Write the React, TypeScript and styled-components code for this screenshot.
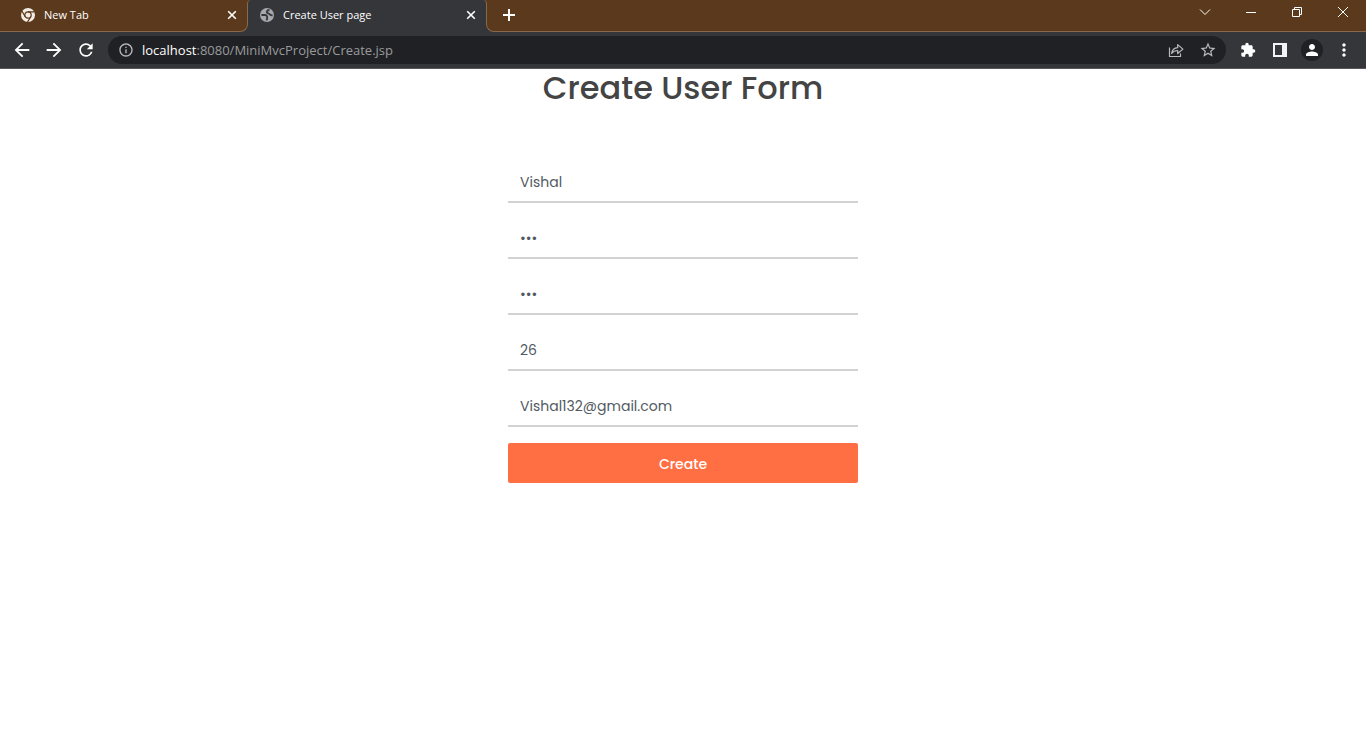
import React from "react";
import styled, { createGlobalStyle } from "styled-components";
import {
  MdArrowBack,
  MdArrowForward,
  MdExtension,
  MdInfoOutline,
  MdMoreVert,
  MdPerson,
  MdRefresh,
  MdStarBorder,
} from "react-icons/md";

const frame = "#5b391c";
const line = "#886a4a";
const bar = "#35363a";

const GlobalStyle = createGlobalStyle`
  *, *::before, *::after { box-sizing: border-box; }
  body { margin: 0; background: #fff; }
  button { padding: 0; border: 0; background: none; color: inherit; cursor: pointer; }
`;

const Browser = styled.header`
  font-family: "Open Sans", "Noto Sans", sans-serif;
  color: #fff;
`;

const TabStrip = styled.div`
  display: flex;
  align-items: flex-end;
  height: 32px;
  background: ${frame};
`;

const InactiveSlot = styled.div<{ $grow?: boolean }>`
  z-index: 1;
  flex: ${(p) => (p.$grow ? "1 1 auto" : "0 0 248px")};
  height: 28px;
  background: ${bar};
`;

const InactiveArea = styled.div<{ $side: "left" | "right" }>`
  display: flex;
  height: 100%;
  background: ${frame};
  border-bottom: 1px solid ${line};
  border-${(p) => (p.$side === "left" ? "right" : "left")}: 1px solid ${line};
  border-radius: ${(p) => (p.$side === "left" ? "0 0 8px 0" : "0 0 0 8px")};
`;

const ActiveTab = styled.div`
  display: flex;
  flex: 0 0 240px;
  height: 32px;
  margin: 0 -1px;
  padding-top: 4px;
  background: ${bar};
  border: 1px solid ${line};
  border-width: 0 1px;
  border-radius: 4px 4px 0 0;
`;

const TabContent = styled.div<{ $start: number }>`
  display: flex;
  flex: 1;
  align-items: center;
  gap: 8px;
  height: 22px;
  padding: 0 7px 0 ${(p) => p.$start}px;
`;

const TabTitle = styled.span`
  flex: 1;
  font-size: 11px;
  line-height: 16px;
  white-space: nowrap;
`;

const SmallButton = styled.button`
  display: flex;
  align-items: center;
  justify-content: center;
  width: 16px;
  height: 16px;
`;

const NewTabButton = styled(SmallButton)`
  margin: 3px 0 0 14px;
`;

const WindowControls = styled.div`
  display: flex;
  height: 16px;
  margin-left: auto;
`;

const WindowButton = styled.button`
  display: flex;
  align-items: center;
  justify-content: center;
  width: 46px;
  height: 16px;
`;

const Toolbar = styled.div`
  display: flex;
  align-items: center;
  gap: 6px;
  height: 37px;
  padding: 0 6px;
  background: ${bar};
  border-bottom: 1px solid #56575b;
`;

const Tools = styled.div`
  display: flex;
`;

const ToolButton = styled.button`
  display: flex;
  align-items: center;
  justify-content: center;
  width: 32px;
  height: 28px;
`;

const Avatar = styled.span`
  display: flex;
  align-items: center;
  justify-content: center;
  width: 22px;
  height: 22px;
  border-radius: 50%;
  background: #202124;
`;

const AddressBar = styled.div`
  display: flex;
  flex: 1;
  align-items: center;
  height: 28px;
  padding: 0 2px 0 10px;
  border-radius: 14px;
  background: #202124;
  color: #b9babd;
`;

const Address = styled.div`
  flex: 1;
  margin-left: 8px;
  font-size: 13px;
  line-height: 20px;
  color: #9a9b9e;
`;

const Host = styled.span`
  color: #fff;
`;

const Page = styled.main`
  display: flex;
  flex-direction: column;
  align-items: center;
  font-family: Poppins, Inter, sans-serif;
`;

const Title = styled.h1`
  margin: 0 0 56px;
  font-size: 32px;
  font-weight: 500;
  line-height: 38px;
  color: #444;
`;

const Form = styled.form`
  display: flex;
  flex-direction: column;
  gap: 16px;
  width: 350px;
  max-width: 100%;
`;

const Field = styled.input`
  width: 100%;
  height: 40px;
  padding: 0 12px;
  border: 0;
  border-bottom: 2px solid #d0d2d4;
  border-radius: 0;
  outline: 0;
  background: transparent;
  font-family: inherit;
  font-size: 14px;
  color: #525a63;
`;

const SubmitButton = styled.button`
  height: 40px;
  padding-top: 2px;
  border-radius: 2px;
  background: #ff6f43;
  font-family: inherit;
  font-size: 14px;
  font-weight: 500;
  color: #fff;
`;

const ChromeLogo = () => (
  <svg width="16" height="16" viewBox="0 0 16 16" aria-hidden="true">
    <circle cx="8" cy="8" r="7" fill="#f3ece4" />
    <g stroke={frame} strokeWidth="1.2" fill="none">
      <circle cx="8" cy="8" r="3.2" />
      <path d="M8 4.8h6.6M5.2 9.6 1.9 4M10.8 9.6 7.4 15.2" />
    </g>
  </svg>
);

const GlobeIcon = () => (
  <svg width="16" height="16" viewBox="0 0 16 16" aria-hidden="true">
    <circle cx="8" cy="8" r="7" fill="#a5a8ad" />
    <g stroke={bar} strokeWidth="1.8" fill="none">
      <path d="M10.5 3C7.500 3.200 7 5.600 9.200 6.300S10.500 8.600 13.600 8.400" />
      <path d="M2.400 8H5.800C8.600 8 8.800 10.600 7.400 13.400" />
    </g>
  </svg>
);

const CloseIcon = () => (
  <svg width="10" height="10" viewBox="0 0 10 10" aria-hidden="true">
    <path d="M1.2 1.2 8.8 8.8M8.8 1.2 1.2 8.8" stroke="#fff" strokeWidth="1.6" />
  </svg>
);

const PlusIcon = () => (
  <svg width="12" height="12" viewBox="0 0 12 12" aria-hidden="true">
    <path d="M6 0v12M0 6h12" stroke="#fff" strokeWidth="2" />
  </svg>
);

const ShareIcon = () => (
  <svg width="16" height="16" viewBox="0 0 16 16" fill="none" stroke="currentColor" strokeWidth="1.2" aria-hidden="true">
    <path d="M1.5 5.5v9h11v-3" />
    <path d="M3.6 11.4c.5-3.600 2.700-5.500 6.100-5.700V2.600l5.200 4.500-5.200 4.400V8.500c-2.700 0-4.600.8-6.100 2.900z" strokeLinejoin="round" />
  </svg>
);

const SidePanelIcon = () => (
  <svg width="14" height="14" viewBox="0 0 14 14" aria-hidden="true">
    <path d="M0 0h14v14H0zM2 2v10h7V2z" fill="#f1f3f4" fillRule="evenodd" />
  </svg>
);

const WindowIcon = ({ d }: { d: string }) => (
  <svg width="12" height="12" viewBox="0 0 12 12" fill="none" stroke="#fff" aria-hidden="true">
    <path d={d} />
  </svg>
);

const windowActions = [
  { label: "Search tabs", d: "M1 3.500 6 8.500 11 3.500" },
  { label: "Minimize", d: "M1 6.500h10" },
  { label: "Restore", d: "M1.500 3.500h7v7h-7zM3.500 3.500v-2h7v7h-2" },
  { label: "Close window", d: "M1 1 11 11M11 1 1 11" },
];

const fields = [
  { name: "name", label: "Name", type: "text", value: "Vishal" },
  { name: "password", label: "Password", type: "password", value: "132" },
  { name: "confirm", label: "Confirm password", type: "password", value: "132" },
  { name: "age", label: "Age", type: "text", value: "26" },
  { name: "email", label: "Email", type: "email", value: "Vishal132@gmail.com" },
];

export default function App() {
  return (
    <>
      <GlobalStyle />
      <Browser>
        <TabStrip>
          <InactiveSlot>
            <InactiveArea $side="left">
              <TabContent $start={20}>
                <ChromeLogo />
                <TabTitle>New Tab</TabTitle>
                <SmallButton aria-label="Close New Tab"><CloseIcon /></SmallButton>
              </TabContent>
            </InactiveArea>
          </InactiveSlot>
          <ActiveTab>
            <TabContent $start={11}>
              <GlobeIcon />
              <TabTitle>Create User page</TabTitle>
              <SmallButton aria-label="Close Create User page"><CloseIcon /></SmallButton>
            </TabContent>
          </ActiveTab>
          <InactiveSlot $grow>
            <InactiveArea $side="right">
              <NewTabButton aria-label="New tab"><PlusIcon /></NewTabButton>
              <WindowControls>
                {windowActions.map((a) => (
                  <WindowButton key={a.label} aria-label={a.label}>
                    <WindowIcon d={a.d} />
                  </WindowButton>
                ))}
              </WindowControls>
            </InactiveArea>
          </InactiveSlot>
        </TabStrip>
        <Toolbar>
          <Tools>
            <ToolButton aria-label="Back"><MdArrowBack size={22} /></ToolButton>
            <ToolButton aria-label="Forward"><MdArrowForward size={22} /></ToolButton>
            <ToolButton aria-label="Reload"><MdRefresh size={20} /></ToolButton>
          </Tools>
          <AddressBar>
            <SmallButton aria-label="Site information"><MdInfoOutline size={16} /></SmallButton>
            <Address><Host>localhost</Host>:8080/MiniMvcProject/Create.jsp</Address>
            <ToolButton aria-label="Share"><ShareIcon /></ToolButton>
            <ToolButton aria-label="Bookmark"><MdStarBorder size={18} /></ToolButton>
          </AddressBar>
          <Tools>
            <ToolButton aria-label="Extensions"><MdExtension size={16} /></ToolButton>
            <ToolButton aria-label="Side panel"><SidePanelIcon /></ToolButton>
            <ToolButton aria-label="Profile"><Avatar><MdPerson size={18} /></Avatar></ToolButton>
            <ToolButton aria-label="Menu"><MdMoreVert size={20} /></ToolButton>
          </Tools>
        </Toolbar>
      </Browser>
      <Page>
        <Title>Create User Form</Title>
        <Form onSubmit={(e) => e.preventDefault()}>
          {fields.map((f) => (
            <Field key={f.name} name={f.name} type={f.type} aria-label={f.label} defaultValue={f.value} />
          ))}
          <SubmitButton type="submit">Create</SubmitButton>
        </Form>
      </Page>
    </>
  );
}
